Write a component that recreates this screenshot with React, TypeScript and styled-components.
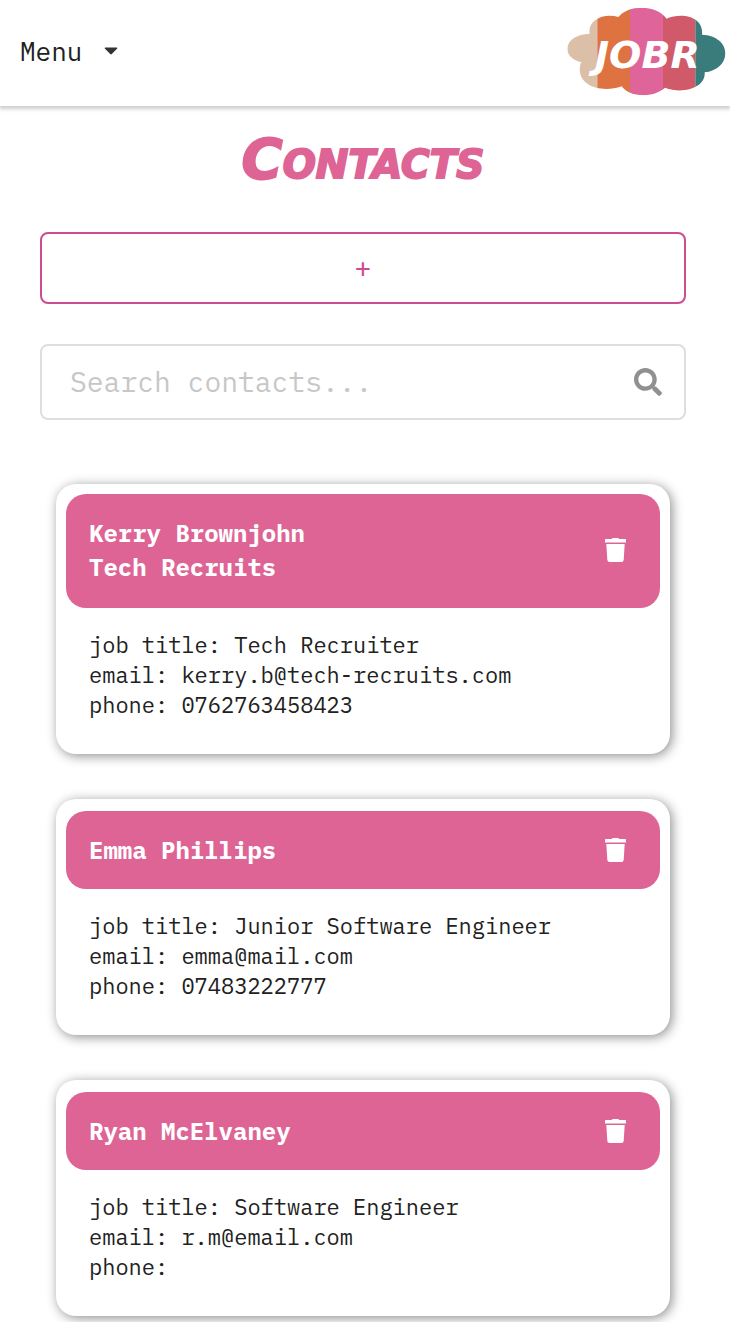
import React from "react";
import styled, { createGlobalStyle } from "styled-components";

const pink = "#de6495";
const mono = `"IBM Plex Mono", "Liberation Mono", monospace`;

const GlobalStyle = createGlobalStyle`
  *, *::before, *::after { box-sizing: border-box; }
  body {
    margin: 0;
    background: #fff;
    color: #212121;
    font-family: ${mono};
  }
`;

const TopBar = styled.header`
  display: flex;
  align-items: center;
  justify-content: space-between;
  height: 106px;
  padding: 0 4px 4px 20px;
  background: #fff;
  box-shadow: 0 2px 4px 1px rgba(0, 0, 0, 0.2);
`;

const MenuButton = styled.button`
  display: flex;
  align-items: center;
  gap: 22px;
  padding: 0;
  border: 0;
  background: none;
  color: inherit;
  font: 26px/34px ${mono};
  cursor: pointer;
`;

const HomeLink = styled.a`
  display: block;
  line-height: 0;
`;

const Page = styled.main`
  display: flex;
  flex-direction: column;
  padding: 20px 44px 6px 40px;
`;

const Title = styled.h1`
  margin: 0;
  color: ${pink};
  font: italic 700 56px/66px "Permanent Marker", "DejaVu Sans", sans-serif;
  font-variant-caps: small-caps;
  text-align: center;
  -webkit-text-stroke: 2px ${pink};
`;

const AddButton = styled.button`
  height: 72px;
  margin-top: 40px;
  border: 2px solid #cc4b93;
  border-radius: 8px;
  background: #fff;
  color: #cc4b93;
  font: 28px/34px ${mono};
  cursor: pointer;
`;

const SearchBox = styled.form`
  display: flex;
  align-items: center;
  height: 76px;
  margin-top: 40px;
  padding: 0 22px 0 28px;
  border: 2px solid #dedede;
  border-radius: 8px;
`;

const SearchInput = styled.input`
  flex: 1;
  min-width: 0;
  padding: 0;
  border: 0;
  outline: 0;
  background: none;
  color: inherit;
  font: 28px/36px ${mono};

  &::placeholder {
    color: #c7c7c7;
    opacity: 1;
  }
`;

const IconButton = styled.button`
  display: flex;
  padding: 0;
  border: 0;
  background: none;
  color: inherit;
  cursor: pointer;
`;

const SearchButton = styled(IconButton)`
  color: #909090;
`;

const CardList = styled.ul`
  display: flex;
  flex-direction: column;
  gap: 45px;
  margin: 64px 0 0;
  padding: 0 16px;
  list-style: none;
`;

const Card = styled.li<{ $tall: boolean }>`
  padding: ${(p) => (p.$tall ? 10 : 12)}px 10px 34px;
  border-radius: 20px;
  background: #fff;
  box-shadow: 2px 2px 12px rgba(0, 0, 0, 0.45);
`;

const CardHeader = styled.div<{ $tall: boolean }>`
  display: flex;
  align-items: center;
  justify-content: space-between;
  padding: ${(p) => (p.$tall ? "22px 34px 24px 23px" : "22px 34px 22px 23px")};
  border-radius: 20px;
  background: ${pink};
  color: #fff;
`;

const CardName = styled.h2`
  display: flex;
  flex-direction: column;
  margin: 0;
  font: 700 24px/34px ${mono};
`;

const Details = styled.div`
  padding: 22px 23px 0;
  font-size: 22px;
  line-height: 30px;
`;

const Line = styled.p`
  margin: 0;
`;

const Logo = () => (
  <svg width="159" height="89" viewBox="51 20 477 267" role="img" aria-label="JOBR">
    <clipPath id="cloud">
      <path d="M119 100C112 62 158 37 205 50C235 12 320 12 350 55C397 35 462 50 456 103C500 105 527 130 526 160C525 190 500 212 464 216C468 262 400 283 345 262C310 293 240 293 215 258C155 279 73 258 92 187L98 186C70 182 52 165 52 146C52 120 80 101 119 100Z" />
    </clipPath>
    <g clipPath="url(#cloud)">
      <rect x="51" y="20" width="91" height="267" fill="#dcbfa7" />
      <rect x="142" y="20" width="98" height="267" fill="#de7240" />
      <rect x="240" y="20" width="99" height="267" fill="#de649a" />
      <rect x="339" y="20" width="97" height="267" fill="#d05a69" />
      <rect x="436" y="20" width="92" height="267" fill="#397c7b" />
    </g>
    <text
      x="292"
      y="202"
      textAnchor="middle"
      fill="#fff"
      fontFamily='"Permanent Marker", "DejaVu Sans", sans-serif'
      fontStyle="italic"
      fontWeight="700"
      fontSize="114"
    >
      JOBR
    </text>
  </svg>
);

const Caret = () => (
  <svg width="14" height="8" viewBox="0 0 14 8" aria-hidden="true">
    <path d="M1.2 0.5H12.8Q14 0.8 13 1.8L7.8 7Q7 7.8 6.2 7L1 1.8Q0 0.8 1.2 0.5Z" fill="#333" />
  </svg>
);

const SearchIcon = () => (
  <svg width="28" height="28" viewBox="0 0 512 512" fill="currentColor" aria-hidden="true">
    <path d="M505 442.7L405.3 343c-4.5-4.5-10.6-7-17-7H372c27.6-35.3 44-79.7 44-128C416 93.1 322.9 0 208 0S0 93.1 0 208s93.1 208 208 208c48.3 0 92.7-16.4 128-44v16.3c0 6.4 2.5 12.5 7 17l99.7 99.7c9.4 9.4 24.6 9.4 33.9 0l28.3-28.3c9.4-9.4 9.4-24.6.1-34zM208 336c-70.7 0-128-57.2-128-128 0-70.7 57.2-128 128-128 70.7 0 128 57.2 128 128 0 70.7-57.2 128-128 128z" />
  </svg>
);

const TrashIcon = () => (
  <svg width="21" height="24" viewBox="0 0 21 24" fill="currentColor" aria-hidden="true">
    <path d="M0 1.5Q0 1 .6 1H6.6L7.4 .2Q7.6 0 8 0H13Q13.4 0 13.6 .2L14.4 1H20.4Q21 1 21 1.5V4.5H0Z" />
    <path d="M1.3 6H19.7L18.7 21.8Q18.5 24 16.5 24H4.5Q2.5 24 2.3 21.8Z" />
  </svg>
);

interface Contact {
  name: string;
  company?: string;
  jobTitle: string;
  email: string;
  phone: string;
}

const contacts: Contact[] = [
  {
    name: "Kerry Brownjohn",
    company: "Tech Recruits",
    jobTitle: "Tech Recruiter",
    email: "kerry.b@tech-recruits.com",
    phone: "0762763458423",
  },
  {
    name: "Emma Phillips",
    jobTitle: "Junior Software Engineer",
    email: "emma@mail.com",
    phone: "07483222777",
  },
  {
    name: "Ryan McElvaney",
    jobTitle: "Software Engineer",
    email: "r.m@email.com",
    phone: "",
  },
];

const ContactCard = ({ contact }: { contact: Contact }) => {
  const tall = Boolean(contact.company);
  return (
    <Card $tall={tall}>
      <CardHeader $tall={tall}>
        <CardName>
          <span>{contact.name}</span>
          {contact.company && <span>{contact.company}</span>}
        </CardName>
        <IconButton type="button" aria-label={`Delete ${contact.name}`}>
          <TrashIcon />
        </IconButton>
      </CardHeader>
      <Details>
        <Line>job title: {contact.jobTitle}</Line>
        <Line>email: {contact.email}</Line>
        <Line>phone: {contact.phone}</Line>
      </Details>
    </Card>
  );
};

export default function App() {
  return (
    <>
      <GlobalStyle />
      <TopBar>
        <MenuButton type="button" aria-haspopup="menu">
          Menu
          <Caret />
        </MenuButton>
        <HomeLink href="#" aria-label="JOBR home">
          <Logo />
        </HomeLink>
      </TopBar>
      <Page>
        <Title>Contacts</Title>
        <AddButton type="button" aria-label="Add contact">
          +
        </AddButton>
        <SearchBox role="search" onSubmit={(e) => e.preventDefault()}>
          <SearchInput type="text" aria-label="Search contacts" placeholder="Search contacts..." />
          <SearchButton type="submit" aria-label="Search">
            <SearchIcon />
          </SearchButton>
        </SearchBox>
        <CardList>
          {contacts.map((contact) => (
            <ContactCard key={contact.name} contact={contact} />
          ))}
        </CardList>
      </Page>
    </>
  );
}
